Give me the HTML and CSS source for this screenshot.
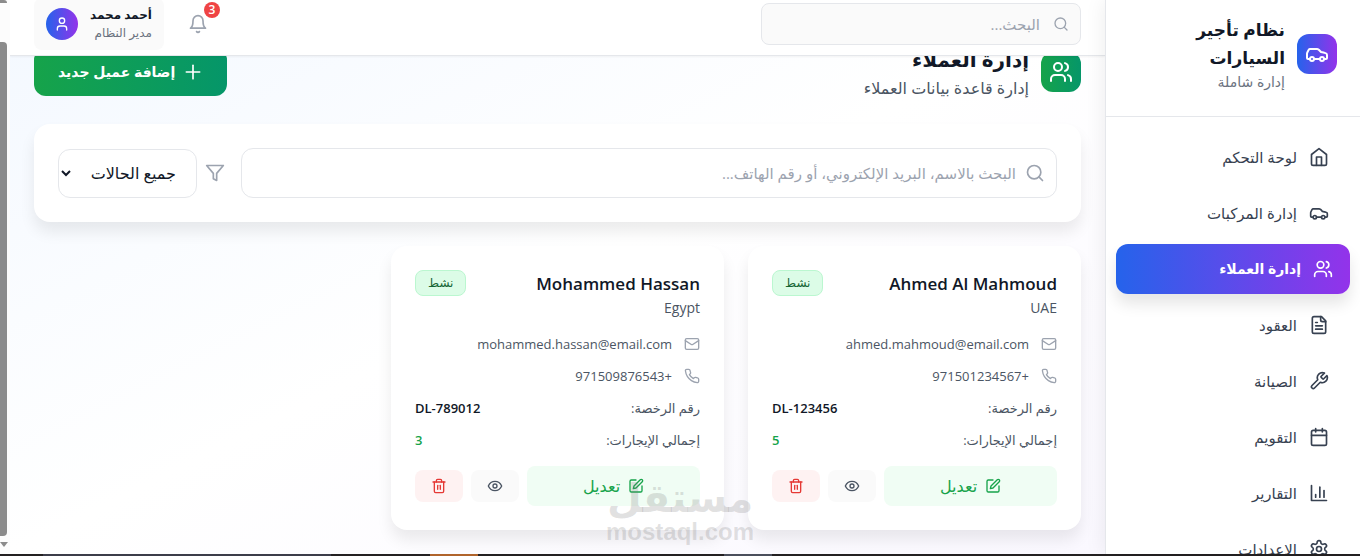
FILE: index.html
```html
<!DOCTYPE html>
<html lang="ar" dir="rtl">
<head>
    <meta charset="UTF-8">
    <meta name="viewport" content="width=device-width, initial-scale=1.0">
    <title>إدارة العملاء</title>
    <link rel="stylesheet" href="styles.css">
</head>
<body>
    <svg class="sprite" aria-hidden="true">
        <symbol id="i-car" viewBox="0 0 24 24"><path d="M19 17h2c.6 0 1-.4 1-1v-3c0-.9-.7-1.7-1.5-1.9C18.7 10.6 16 10 16 10s-1.300-1.400-2.200-2.300c-.5-.4-1.100-.7-1.800-.7H5c-.6 0-1.100.4-1.400.9l-1.400 2.900A3.700 3.700 0 0 0 2 12v4c0 .6.4 1 1 1h2"/><circle cx="7" cy="17" r="2"/><path d="M9 17h6"/><circle cx="17" cy="17" r="2"/></symbol>
        <symbol id="i-home" viewBox="0 0 24 24"><path d="m3 9 9-7 9 7v11a2 2 0 0 1-2 2H5a2 2 0 0 1-2-2z"/><path d="M9 22V12h6v10"/></symbol>
        <symbol id="i-users" viewBox="0 0 24 24"><path d="M16 21v-2a4 4 0 0 0-4-4H6a4 4 0 0 0-4 4v2"/><circle cx="9" cy="7" r="4"/><path d="M22 21v-2a4 4 0 0 0-3-3.870"/><path d="M16 3.130a4 4 0 0 1 0 7.750"/></symbol>
        <symbol id="i-file" viewBox="0 0 24 24"><path d="M15 2H6a2 2 0 0 0-2 2v16a2 2 0 0 0 2 2h12a2 2 0 0 0 2-2V7Z"/><path d="M14 2v4a2 2 0 0 0 2 2h4"/><path d="M10 9H8"/><path d="M16 13H8"/><path d="M16 17H8"/></symbol>
        <symbol id="i-wrench" viewBox="0 0 24 24"><path d="M14.700 6.300a1 1 0 0 0 0 1.400l1.600 1.600a1 1 0 0 0 1.400 0l3.770-3.770a6 6 0 0 1-7.940 7.940l-6.910 6.910a2.120 2.120 0 0 1-3-3l6.910-6.910a6 6 0 0 1 7.940-7.940l-3.760 3.760z"/></symbol>
        <symbol id="i-calendar" viewBox="0 0 24 24"><path d="M8 2v4"/><path d="M16 2v4"/><rect width="18" height="18" x="3" y="4" rx="2"/><path d="M3 10h18"/></symbol>
        <symbol id="i-chart" viewBox="0 0 24 24"><path d="M3 3v18h18"/><path d="M18 17V9"/><path d="M13 17V5"/><path d="M8 17v-3"/></symbol>
        <symbol id="i-settings" viewBox="0 0 24 24"><path d="M12.220 2h-.44a2 2 0 0 0-2 2v.18a2 2 0 0 1-1 1.730l-.43.25a2 2 0 0 1-2 0l-.15-.08a2 2 0 0 0-2.730.73l-.22.38a2 2 0 0 0 .73 2.730l.15.1a2 2 0 0 1 1 1.720v.51a2 2 0 0 1-1 1.740l-.15.09a2 2 0 0 0-.73 2.730l.22.38a2 2 0 0 0 2.730.73l.15-.08a2 2 0 0 1 2 0l.43.25a2 2 0 0 1 1 1.730V20a2 2 0 0 0 2 2h.44a2 2 0 0 0 2-2v-.18a2 2 0 0 1 1-1.730l.43-.25a2 2 0 0 1 2 0l.15.08a2 2 0 0 0 2.730-.73l.22-.39a2 2 0 0 0-.73-2.730l-.15-.08a2 2 0 0 1-1-1.740v-.5a2 2 0 0 1 1-1.740l.15-.09a2 2 0 0 0 .73-2.730l-.22-.38a2 2 0 0 0-2.730-.73l-.15.08a2 2 0 0 1-2 0l-.43-.25a2 2 0 0 1-1-1.730V4a2 2 0 0 0-2-2z"/><circle cx="12" cy="12" r="3"/></symbol>
        <symbol id="i-search" viewBox="0 0 24 24"><circle cx="11" cy="11" r="8"/><path d="m21 21-4.300-4.300"/></symbol>
        <symbol id="i-bell" viewBox="0 0 24 24"><path d="M6 8a6 6 0 0 1 12 0c0 7 3 9 3 9H3s3-2 3-9"/><path d="M10.300 21a1.940 1.940 0 0 0 3.400 0"/></symbol>
        <symbol id="i-user" viewBox="0 0 24 24"><path d="M19 21v-2a4 4 0 0 0-4-4H9a4 4 0 0 0-4 4v2"/><circle cx="12" cy="7" r="4"/></symbol>
        <symbol id="i-plus" viewBox="0 0 24 24"><path d="M4 12h16"/><path d="M12 4v16"/></symbol>
        <symbol id="i-filter" viewBox="0 0 24 24"><path d="M22 3H2l8 9.460V19l4 2v-8.540L22 3z"/></symbol>
        <symbol id="i-mail" viewBox="0 0 24 24"><rect width="20" height="16" x="2" y="4" rx="2"/><path d="m22 7-8.970 5.700a1.940 1.940 0 0 1-2.060 0L2 7"/></symbol>
        <symbol id="i-phone" viewBox="0 0 24 24"><path d="M22 16.920v3a2 2 0 0 1-2.180 2 19.790 19.790 0 0 1-8.630-3.070 19.500 19.500 0 0 1-6-6 19.790 19.790 0 0 1-3.070-8.670A2 2 0 0 1 4.110 2h3a2 2 0 0 1 2 1.720 12.840 12.840 0 0 0 .7 2.810 2 2 0 0 1-.45 2.110L8.090 9.910a16 16 0 0 0 6 6l1.270-1.270a2 2 0 0 1 2.110-.45 12.840 12.840 0 0 0 2.810.7A2 2 0 0 1 22 16.920z"/></symbol>
        <symbol id="i-edit" viewBox="0 0 24 24"><path d="M12 3H5a2 2 0 0 0-2 2v14a2 2 0 0 0 2 2h14a2 2 0 0 0 2-2v-7"/><path d="M18.375 2.625a2.121 2.121 0 1 1 3 3L12 15l-4 1 1-4Z"/></symbol>
        <symbol id="i-eye" viewBox="0 0 24 24"><path d="M2 12s3-7 10-7 10 7 10 7-3 7-10 7-10-7-10-7Z"/><circle cx="12" cy="12" r="3"/></symbol>
        <symbol id="i-trash" viewBox="0 0 24 24"><path d="M3 6h18"/><path d="M19 6v14c0 1-1 2-2 2H7c-1 0-2-1-2-2V6"/><path d="M8 6V4c0-1 1-2 2-2h4c1 0 2 1 2 2v2"/><path d="M10 11v6"/><path d="M14 11v6"/></symbol>
    </svg>

    <div class="app">
        <aside class="sidebar">
            <div class="brand">
                <div class="brand-logo"><svg class="icon icon-lg"><use href="#i-car"/></svg></div>
                <div class="brand-text">
                    <h1>نظام تأجير السيارات</h1>
                    <p>إدارة شاملة</p>
                </div>
            </div>
            <nav class="nav">
                <a href="#"><svg class="icon"><use href="#i-home"/></svg>لوحة التحكم</a>
                <a href="#"><svg class="icon"><use href="#i-car"/></svg>إدارة المركبات</a>
                <a href="#" class="active"><svg class="icon"><use href="#i-users"/></svg>إدارة العملاء</a>
                <a href="#"><svg class="icon"><use href="#i-file"/></svg>العقود</a>
                <a href="#"><svg class="icon"><use href="#i-wrench"/></svg>الصيانة</a>
                <a href="#"><svg class="icon"><use href="#i-calendar"/></svg>التقويم</a>
                <a href="#"><svg class="icon"><use href="#i-chart"/></svg>التقارير</a>
                <a href="#"><svg class="icon"><use href="#i-settings"/></svg>الإعدادات</a>
            </nav>
        </aside>

        <div class="main">
            <header class="topbar">
                <label class="search search-top">
                    <svg class="icon icon-sm"><use href="#i-search"/></svg>
                    <input type="text" placeholder="البحث..." aria-label="البحث">
                </label>
                <div class="topbar-actions">
                    <button class="bell" aria-label="3">
                        <svg class="icon"><use href="#i-bell"/></svg>
                        <span class="bell-count">3</span>
                    </button>
                    <div class="user">
                        <div class="user-text">
                            <p class="user-name">أحمد محمد</p>
                            <p class="user-role">مدير النظام</p>
                        </div>
                        <div class="avatar"><svg class="icon icon-sm"><use href="#i-user"/></svg></div>
                    </div>
                </div>
            </header>

            <main class="content">
                <div class="page-head">
                    <div class="page-title">
                        <div class="page-icon"><svg class="icon icon-lg"><use href="#i-users"/></svg></div>
                        <div>
                            <h2>إدارة العملاء</h2>
                            <p>إدارة قاعدة بيانات العملاء</p>
                        </div>
                    </div>
                    <button class="btn-add"><svg class="icon"><use href="#i-plus"/></svg>إضافة عميل جديد</button>
                </div>

                <div class="filters">
                    <label class="search search-main">
                        <svg class="icon"><use href="#i-search"/></svg>
                        <input type="text" placeholder="البحث بالاسم، البريد الإلكتروني، أو رقم الهاتف..." aria-label="البحث بالاسم">
                    </label>
                    <div class="status-filter">
                        <svg class="icon"><use href="#i-filter"/></svg>
                        <select aria-label="جميع الحالات">
                            <option>جميع الحالات</option>
                        </select>
                    </div>
                </div>

                <div class="customers">
                    <article class="customer">
                        <div class="customer-head">
                            <div>
                                <h3>Ahmed Al Mahmoud</h3>
                                <p>UAE</p>
                            </div>
                            <span class="status">نشط</span>
                        </div>
                        <div class="customer-info">
                            <div class="contact"><svg class="icon icon-sm"><use href="#i-mail"/></svg>ahmed.mahmoud@email.com</div>
                            <div class="contact"><svg class="icon icon-sm"><use href="#i-phone"/></svg>+971501234567</div>
                            <div class="pair"><span>رقم الرخصة:</span><b>DL-123456</b></div>
                            <div class="pair"><span>إجمالي الإيجارات:</span><b class="green">5</b></div>
                        </div>
                        <div class="customer-actions">
                            <button class="btn-edit"><svg class="icon icon-sm"><use href="#i-edit"/></svg>تعديل</button>
                            <button class="btn-view" aria-label="عرض"><svg class="icon icon-sm"><use href="#i-eye"/></svg></button>
                            <button class="btn-delete" aria-label="حذف"><svg class="icon icon-sm"><use href="#i-trash"/></svg></button>
                        </div>
                    </article>

                    <article class="customer">
                        <div class="customer-head">
                            <div>
                                <h3>Mohammed Hassan</h3>
                                <p>Egypt</p>
                            </div>
                            <span class="status">نشط</span>
                        </div>
                        <div class="customer-info">
                            <div class="contact"><svg class="icon icon-sm"><use href="#i-mail"/></svg>mohammed.hassan@email.com</div>
                            <div class="contact"><svg class="icon icon-sm"><use href="#i-phone"/></svg>+971509876543</div>
                            <div class="pair"><span>رقم الرخصة:</span><b>DL-789012</b></div>
                            <div class="pair"><span>إجمالي الإيجارات:</span><b class="green">3</b></div>
                        </div>
                        <div class="customer-actions">
                            <button class="btn-edit"><svg class="icon icon-sm"><use href="#i-edit"/></svg>تعديل</button>
                            <button class="btn-view" aria-label="عرض"><svg class="icon icon-sm"><use href="#i-eye"/></svg></button>
                            <button class="btn-delete" aria-label="حذف"><svg class="icon icon-sm"><use href="#i-trash"/></svg></button>
                        </div>
                    </article>
                </div>
            </main>
        </div>

        <div class="scrollbar">
            <div class="scroll-top"></div>
            <div class="scroll-thumb"></div>
            <div class="scroll-arrow"></div>
        </div>
    </div>

    <div class="taskbar"><span class="task"></span><span class="task task-orange"></span><span class="task task-small"></span></div>

    <div class="watermark">
        <span class="watermark-ar">مستقل</span>
        <span class="watermark-en">mostaql.com</span>
    </div>
</body>
</html>
```

FILE: styles.css
```css
* {
    box-sizing: border-box;
    margin: 0;
    padding: 0;
}
body {
    height: 100vh;
    display: flex;
    flex-direction: column;
    overflow: hidden;
    position: relative;
    background: #fff;
    color: #111827;
    font-family: "Open Sans", "Noto Sans", "DejaVu Sans", sans-serif;
    font-size: 16px;
    line-height: 24px;
}
button, input, select {
    font: inherit;
    color: inherit;
}
button {
    border: none;
    cursor: pointer;
}
.sprite {
    position: absolute;
    width: 0;
    height: 0;
}
.icon {
    width: 20px;
    height: 20px;
    flex-shrink: 0;
    fill: none;
    stroke: currentColor;
    stroke-width: 2;
    stroke-linecap: round;
    stroke-linejoin: round;
}
.icon-sm {
    width: 16px;
    height: 16px;
}
.icon-lg {
    width: 24px;
    height: 24px;
}
.app {
    flex: 1;
    min-height: 0;
    display: flex;
}

/* sidebar */
.sidebar {
    width: 255px;
    flex-shrink: 0;
    overflow: hidden;
    background: #fff;
    border-left: 1px solid #e5e7eb;
    box-shadow: 0 0 20px rgba(0, 0, 0, 0.08);
    z-index: 3;
}
.brand {
    display: flex;
    align-items: center;
    gap: 12px;
    padding: 16px 23px 24px;
    border-bottom: 1px solid #e5e7eb;
}
.brand-logo {
    display: flex;
    align-items: center;
    justify-content: center;
    width: 40px;
    height: 40px;
    flex-shrink: 0;
    border-radius: 12px;
    background: linear-gradient(to right, #2563eb, #9333ea);
    color: #fff;
}
.brand-text {
    max-width: 112px;
}
.brand h1 {
    font-size: 17px;
    line-height: 28px;
    font-weight: 700;
}
.brand p {
    font-size: 14px;
    line-height: 20px;
    color: #6b7280;
}
.nav {
    display: flex;
    flex-direction: column;
    gap: 8px;
    padding: 16px;
}
.nav a {
    display: flex;
    align-items: center;
    gap: 12px;
    height: 48px;
    flex-shrink: 0;
    padding: 0 15px;
    border-radius: 12px;
    color: #374151;
    font-size: 15px;
    font-weight: 500;
    text-decoration: none;
}
.nav a.active {
    height: 50px;
    margin: -1px -6px;
    padding: 0 17px;
    background: linear-gradient(to right, #2563eb, #9333ea);
    box-shadow: 0 10px 15px rgba(0, 0, 0, 0.1);
    color: #fff;
    font-size: 14px;
    font-weight: 600;
}

/* top bar */
.main {
    flex: 1;
    min-width: 0;
    overflow: hidden;
    background: linear-gradient(to bottom right, #f3f8ff, #fff 50%, #faf8ff);
}
.topbar {
    position: relative;
    z-index: 2;
    display: flex;
    align-items: center;
    justify-content: space-between;
    height: 56px;
    padding: 0 24px 7px;
    background: #fff;
    border-bottom: 1px solid #e5e7eb;
    box-shadow: 0 1px 2px rgba(0, 0, 0, 0.05);
}
.search {
    position: relative;
    display: block;
    color: #9ca3af;
}
.search .icon {
    position: absolute;
    top: 50%;
    right: 12px;
    transform: translateY(-50%);
}
.search input {
    display: block;
    width: 100%;
    padding: 0 40px 0 16px;
    border: 1px solid #e5e7eb;
    outline: none;
    color: #111827;
    font-size: 15px;
}
.search input::placeholder {
    color: #9ca3af;
}
.search-top {
    width: 320px;
}
.search-top input {
    height: 42px;
    border-radius: 8px;
    background: #fafafa;
}
.topbar-actions {
    display: flex;
    align-items: center;
    gap: 16px;
}
.bell {
    position: relative;
    display: flex;
    padding: 8px;
    background: none;
    color: #9ca3af;
}
.bell-count {
    position: absolute;
    top: -4px;
    right: -4px;
    width: 16px;
    height: 16px;
    border-radius: 50%;
    background: #ef4444;
    color: #fff;
    font-size: 12px;
    font-weight: 600;
    line-height: 16px;
    text-align: center;
}
.user {
    display: flex;
    align-items: center;
    gap: 12px;
    height: 52px;
    padding: 0 12px;
    border-radius: 8px;
    background: #fafafa;
}
.user-name {
    font-size: 12px;
    line-height: 18px;
    font-weight: 600;
}
.user-role {
    font-size: 12px;
    line-height: 18px;
    color: #6b7280;
}
.avatar {
    display: flex;
    align-items: center;
    justify-content: center;
    width: 32px;
    height: 32px;
    border-radius: 50%;
    background: linear-gradient(to right, #2563eb, #9333ea);
    color: #fff;
}

/* page, scrolled slightly under the top bar */
.content {
    margin-top: -12px;
    padding: 0 24px;
}
.page-head {
    display: flex;
    align-items: center;
    justify-content: space-between;
    margin-bottom: 24px;
}
.page-title {
    display: flex;
    align-items: center;
    gap: 12px;
}
.page-title h2 {
    font-size: 20px;
    line-height: 32px;
    font-weight: 700;
}
.page-title p {
    color: #4b5563;
}
.page-icon {
    display: flex;
    align-items: center;
    justify-content: center;
    width: 40px;
    height: 40px;
    border-radius: 12px;
    background: linear-gradient(to right, #16a34a, #059669);
    color: #fff;
}
.btn-add {
    display: flex;
    align-items: center;
    gap: 8px;
    height: 48px;
    padding: 0 24px;
    border-radius: 12px;
    background: linear-gradient(to right, #16a34a, #059669);
    color: #fff;
    font-size: 14px;
    font-weight: 600;
}
.filters {
    display: flex;
    align-items: center;
    gap: 16px;
    margin-bottom: 24px;
    padding: 24px;
    border-radius: 16px;
    background: #fff;
    box-shadow: 0 10px 15px rgba(0, 0, 0, 0.08);
}
.search-main {
    flex: 1;
}
.search-main input {
    height: 50px;
    border-radius: 12px;
}
.status-filter {
    display: flex;
    align-items: center;
    gap: 8px;
    color: #9ca3af;
}
.status-filter select {
    width: 139px;
    height: 49px;
    padding: 0 16px 0 0;
    border: 1px solid #e5e7eb;
    border-radius: 12px;
    background: #fff;
    color: #111827;
}
.customers {
    display: grid;
    grid-template-columns: repeat(3, 1fr);
    gap: 24px;
}
.customer {
    padding: 24px;
    border-radius: 16px;
    background: #fff;
    box-shadow: 0 10px 15px rgba(0, 0, 0, 0.08);
}
.customer-head {
    display: flex;
    align-items: flex-start;
    justify-content: space-between;
    margin-bottom: 16px;
}
.customer-head h3 {
    font-size: 17px;
    line-height: 28px;
    font-weight: 600;
}
.customer-head p {
    font-size: 14px;
    line-height: 20px;
    color: #4b5563;
}
.status {
    padding: 4px 12px;
    border: 1px solid #bbf7d0;
    border-radius: 8px;
    background: #dcfce7;
    color: #166534;
    font-size: 12px;
    line-height: 16px;
}
.customer-info {
    display: flex;
    flex-direction: column;
    gap: 12px;
    margin-bottom: 16px;
    color: #4b5563;
    font-size: 13px;
    line-height: 20px;
}
.contact {
    display: flex;
    align-items: center;
    gap: 12px;
}
.contact .icon {
    color: #9ca3af;
}
.pair {
    display: flex;
    justify-content: space-between;
}
.pair b {
    color: #111827;
    font-weight: 600;
}
.pair .green {
    color: #16a34a;
}
.customer-actions {
    display: flex;
    align-items: center;
    gap: 8px;
}
.customer-actions button {
    display: flex;
    align-items: center;
    justify-content: center;
    width: 48px;
    height: 32px;
    border-radius: 8px;
}
.customer-actions .btn-edit {
    flex: 1;
    gap: 8px;
    height: 40px;
    background: #f0fdf4;
    color: #16a34a;
    font-weight: 500;
}
.customer-actions .btn-view {
    background: #fafafa;
    color: #4b5563;
}
.customer-actions .btn-delete {
    background: #fef2f2;
    color: #e53935;
}

/* window scrollbar and taskbar edge */
.scrollbar {
    width: 10px;
    flex-shrink: 0;
    display: flex;
    flex-direction: column;
    align-items: flex-end;
    padding-bottom: 7px;
    background: #fcfcfc;
}
.scroll-top {
    width: 7px;
    height: 3px;
    margin-bottom: 39px;
    border-radius: 0 4px 0 0;
    background: #8b8b8b;
}
.scroll-thumb {
    flex: 1;
    width: 7px;
    margin-bottom: 6px;
    border-radius: 0 4px 4px 0;
    background: #8b8b8b;
}
.scrollbar > div {
    align-self: flex-end;
}
.scroll-arrow {
    border: 4px solid transparent;
    border-top: 5px solid #8b8b8b;
    border-bottom: none;
}
.taskbar {
    display: flex;
    direction: ltr;
    height: 2px;
    flex-shrink: 0;
    padding-left: 43px;
    background: #242122;
}
.task {
    width: 288px;
    margin-right: 99px;
    background: #3c3d4a;
}
.task-orange {
    width: 48px;
    margin-right: 246px;
    background: #b0642c;
}
.task-small {
    width: 48px;
    background: #4b4f5c;
}
.watermark {
    position: absolute;
    left: 606px;
    bottom: 12px;
    display: flex;
    flex-direction: column;
    align-items: center;
    color: rgba(120, 120, 120, 0.22);
    font-weight: 700;
    z-index: 5;
}
.watermark-ar {
    font-family: "DejaVu Sans", sans-serif;
    font-size: 40px;
    line-height: 44px;
}
.watermark-en {
    font-family: "Liberation Sans", sans-serif;
    font-size: 24px;
    line-height: 24px;
}
```
